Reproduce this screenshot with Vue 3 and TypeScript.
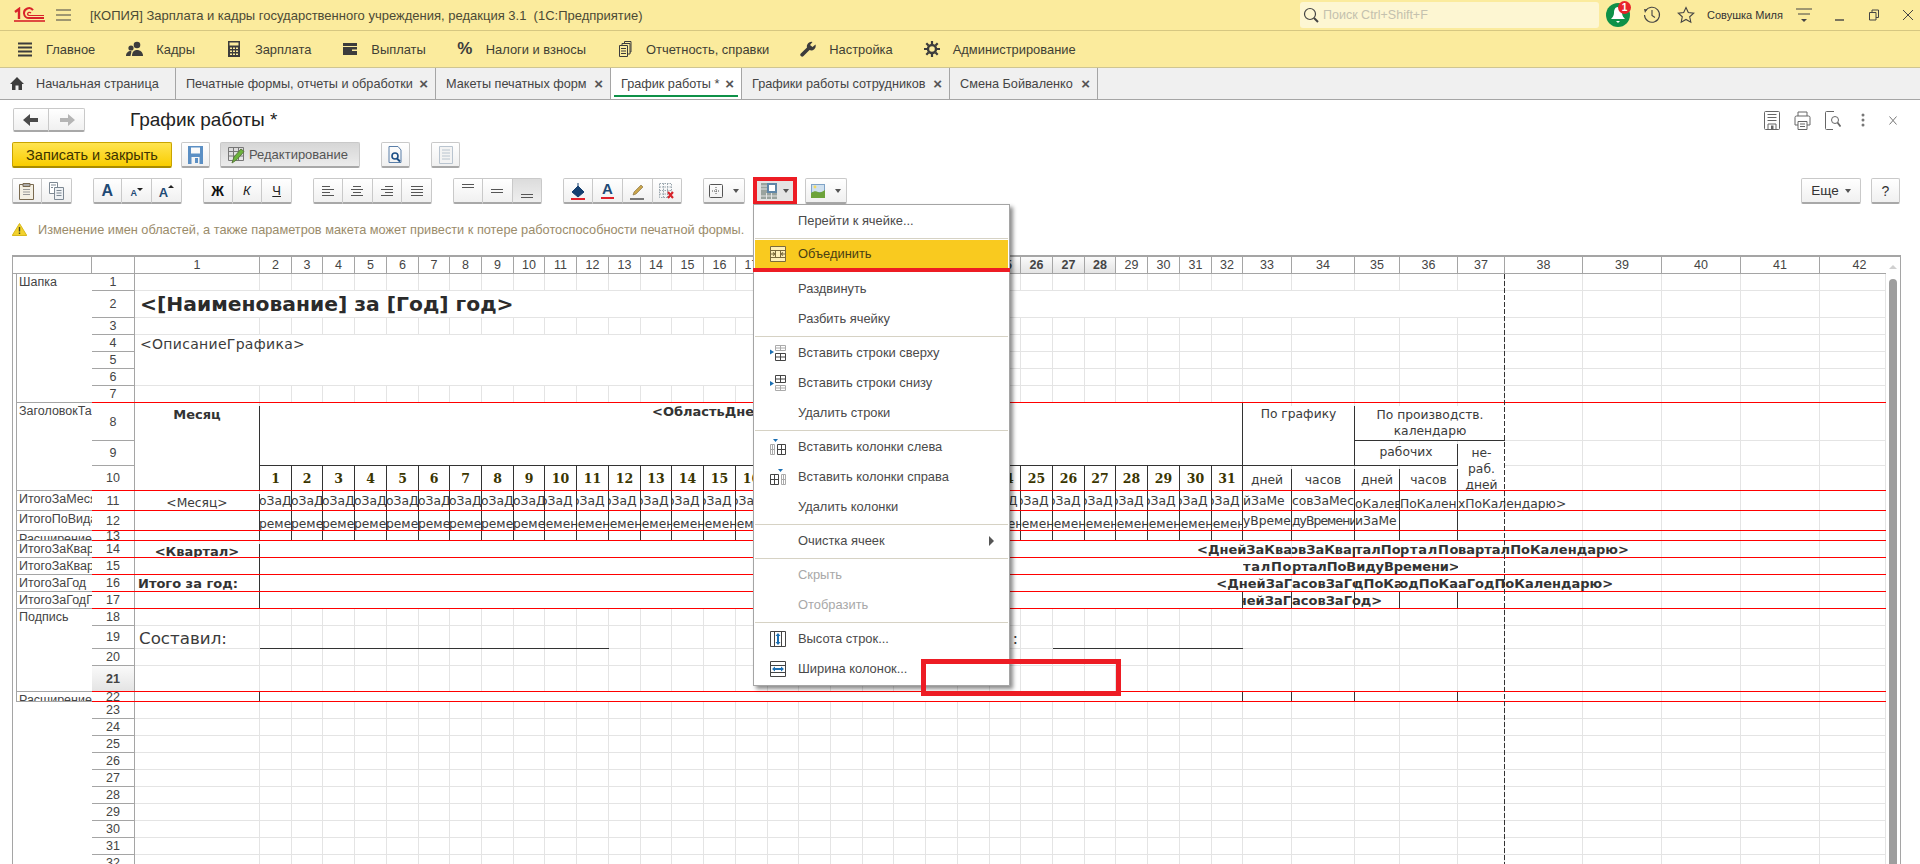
<template>
  <div class="app">
    <!-- title bar -->
    <div class="titlebar">
      <svg class="logo" width="31" height="16" viewBox="0 0 31 16" fill="none" stroke="#d8232a">
        <path d="M1 5 5 2v10" stroke-width="2.4" />
        <path d="M19 3.2A5 5 0 0 0 10 6.5 5 5 0 0 0 15 11h15" stroke-width="2" />
        <path d="M17 6a2 2 0 0 0-3.5 1 2 2 0 0 0 2 1.5H30" stroke-width="1.2" />
        <path d="M0 14h31" stroke-width="1.6" />
      </svg>
      <svg class="burger" width="15" height="12" viewBox="0 0 15 12" stroke="#444"><path d="M0 1h15M0 6h15M0 11h15" /></svg>
      <span class="app-title">[КОПИЯ] Зарплата и кадры государственного учреждения, редакция 3.1&nbsp; (1С:Предприятие)</span>
      <div class="search">
        <svg width="16" height="17" viewBox="0 0 16 17" fill="none" stroke="#444"><circle cx="7" cy="7" r="5.5" stroke-width="1.2" /><path d="m11 11 4 4" stroke-width="2" /></svg>
        <span>Поиск Ctrl+Shift+F</span>
      </div>
      <div class="bell">
        <svg width="26" height="26" viewBox="0 0 26 26"><circle cx="13" cy="13" r="12" fill="#0e9148" /><path d="M13 5c-3 0-4 3-4 6 0 3-2 5-3 6h14c-1-1-3-3-3-6 0-3-1-6-4-6zM11 19h4l-2 2z" fill="#fff" /></svg>
        <span class="badge">1</span>
      </div>
      <svg class="hist" width="18" height="18" viewBox="0 0 18 18" fill="none" stroke="#444" stroke-width="1.1"><path d="M2.5 5A7.5 7.5 0 1 1 1.5 9" /><path d="M1 3l3 .5L2 7z" fill="#444" stroke="none" /><path d="M9 4v5.5l3 2" /></svg>
      <svg class="star" width="18" height="18" viewBox="0 0 18 18" fill="none" stroke="#444" stroke-width="1.1"><path d="m9 1.5 2.3 5 5.4.6-4 3.7 1.1 5.4L9 13.4l-4.8 2.8 1.1-5.4-4-3.7 5.4-.6z" /></svg>
      <span class="user">Совушка Миля</span>
      <svg class="umenu" width="16" height="16" viewBox="0 0 16 16" stroke="#444"><path d="M0 2h16M2 7h12" /><path d="M5 12h6l-3 3z" fill="#444" stroke="none" /></svg>
      <svg class="win" width="12" height="12" viewBox="0 0 12 12" stroke="#444"><path d="M1 11h9" stroke-width="1.4" /></svg>
      <svg class="win" width="12" height="12" viewBox="0 0 12 12" fill="none" stroke="#444"><path d="M1.500 3.500h6.500v7.500H1.500zM4 3.500V1h6.500v7.500H8" /></svg>
      <svg class="win" width="12" height="12" viewBox="0 0 12 12" stroke="#444"><path d="m1 1 10 10M11 1 1 11" /></svg>
    </div>

    <!-- sections -->
    <nav class="menubar">
      <div class="mitem">
        <svg width="16" height="16" viewBox="0 0 16 16" stroke="#3c3c3c" stroke-width="2"><path d="M1 2.500h14M1 6.500h14M1 10.500h14M1 14.500h14" /></svg>
        <span>Главное</span>
      </div>
      <div class="mitem">
        <svg width="17" height="16" viewBox="0 0 17 16" fill="#3c3c3c"><circle cx="11" cy="4" r="3.300" /><path d="M6 15c0-4 2-6 5-6s6 2 6 6z" /><circle cx="5" cy="7" r="2.600" /><path d="M0 15c0-3 2-5 5-5 1 0 0 2-.5 5z" /></svg>
        <span>Кадры</span>
      </div>
      <div class="mitem">
        <svg width="16" height="16" viewBox="0 0 16 16" fill="#3c3c3c"><path fill-rule="evenodd" d="M2 0h12v16H2zM3.500 1.500v3h9v-3zM4 6.500V8h2V6.500zm3 0V8h2V6.500zm3 0V8h2V6.500zM4 9.500V11h2V9.500zm3 0V11h2V9.500zm3 0V11h2V9.500zM4 12.500V14h2v-1.500zm3 0V14h2v-1.500zm3 0V14h2v-1.500z" /></svg>
        <span>Зарплата</span>
      </div>
      <div class="mitem">
        <svg width="16" height="16" viewBox="0 0 16 16" fill="#3c3c3c"><path d="M1 2h14v3H1zM1 6h14v8H1z" /><path d="M10 8.500h5v1.500h-5z" fill="#fbeb9d" /></svg>
        <span>Выплаты</span>
      </div>
      <div class="mitem">
        <b class="pct">%</b>
        <span>Налоги и взносы</span>
      </div>
      <div class="mitem">
        <svg width="16" height="16" viewBox="0 0 16 16" fill="none" stroke="#3c3c3c"><path d="M2.500 4.500h8v11h-8zM5 4.500v-2h8v10.500h-2.500M7.500 2.500V.5h6.500v10.500H13" /><path d="M4 7.500h5M4 10h5M4 12.500h5" /></svg>
        <span>Отчетность, справки</span>
      </div>
      <div class="mitem">
        <svg width="16" height="16" viewBox="0 0 16 16" fill="#3c3c3c"><path d="M15.500 3.500 12.500 6 10 4 12.500 1A4.500 4.500 0 0 0 7 6.500L.8 12.500a1.800 1.800 0 0 0 2.700 2.500l6-6a4.500 4.500 0 0 0 6-5.500z" /></svg>
        <span>Настройка</span>
      </div>
      <div class="mitem">
        <svg width="16" height="16" viewBox="0 0 16 16" fill="none" stroke="#3c3c3c"><circle cx="8" cy="8" r="4" stroke-width="2.400" /><path d="M8 0v3M8 13v3M0 8h3M13 8h3M2.300 2.300l2.200 2.200M11.500 11.500l2.200 2.200M2.300 13.700l2.200-2.200M11.500 4.500l2.200-2.200" stroke-width="2.200" /></svg>
        <span>Администрирование</span>
      </div>
    </nav>

    <!-- open tabs -->
    <div class="tabs">
      <div class="tab first">
        <svg width="14" height="13" viewBox="0 0 14 13" fill="#3c3c3c"><path d="M7 0 0 7h2v6h3.500V8.500h3V13H12V7h2z" /></svg>
        <span>Начальная страница</span>
      </div>
      <div v-for="t in tabs" :key="t.name" class="tab" :class="{ active: t.active }" :style="{ width: t.w + 'px' }">
        <span>{{ t.name }}</span>
        <i class="x">×</i>
      </div>
    </div>

    <div class="form">
      <div class="form-head">
        <div class="grp nav">
          <button class="btn">
            <svg width="16" height="12" viewBox="0 0 16 12" fill="#4a4a4a"><path d="M0 6 7 0v4h8v4H7v4z" /></svg>
          </button>
          <button class="btn">
            <svg width="16" height="12" viewBox="0 0 16 12" fill="#b5b5b5"><path d="M16 6 9 0v4H1v4h8v4z" /></svg>
          </button>
        </div>
        <h1>График работы *</h1>
        <div class="head-icons">
          <svg width="16" height="19" viewBox="0 0 16 19" fill="none" stroke="#666"><path d="M.5 1.500a1 1 0 0 1 1-1h13a1 1 0 0 1 1 1v16a1 1 0 0 1-1 1h-13a1 1 0 0 1-1-1z" /><path d="M3.500 3.500h9M3.500 6.500h9M3.500 9.500h9" /><path d="M4 13h8v5.500H4z" /><path d="M7 14.500h2.500v4H7z" fill="#666" stroke="none" /></svg>
          <svg width="17" height="19" viewBox="0 0 17 19" fill="none" stroke="#666"><path d="M4 5V1h9v4M4 14H1V6.500A1.500 1.500 0 0 1 2.500 5h12A1.500 1.500 0 0 1 16 6.500V14h-3" /><path d="M4 10.500h9v8H4zM6 13h5M6 15.500h5" /></svg>
          <svg width="16" height="19" viewBox="0 0 16 19" fill="none" stroke="#666"><path d="M8 18.500H1.500a1 1 0 0 1-1-1v-16a1 1 0 0 1 1-1H9" /><circle cx="10" cy="9" r="3.500" /><path d="m12.500 11.500 3 4" stroke-width="1.800" /></svg>
          <svg width="16" height="14" viewBox="0 0 16 14" fill="#777"><circle cx="8" cy="2" r="1.500" /><circle cx="8" cy="7" r="1.500" /><circle cx="8" cy="12" r="1.500" /></svg>
          <svg width="16" height="9" viewBox="0 0 16 9" stroke="#777"><path d="m4.500.5 7 8M11.500.5l-7 8" /></svg>
        </div>
      </div>

      <div class="bar one">
        <button class="btn primary">Записать и закрыть</button>
        <button class="btn ic">
          <svg width="15" height="18" viewBox="0 0 15 18" fill="#5b8fc4"><path fill-rule="evenodd" d="M0 0h15v18H0zM3 1.500v6h9v-6zM3.500 11v7h8v-7z" /><path d="M7 12h3v5H7z" /></svg>
        </button>
        <button class="btn pressed">
          <svg width="18" height="18" viewBox="0 0 18 18" fill="none" stroke="#777"><path d="M.5 1.500h15v13H.5zM.5 5.500h15M.5 10h15M5.500 1.500v13M10.500 1.500v13" /><path d="M4 17 6 11l7-8 3 2.500-7 8z" fill="#6bb33c" stroke="#5a7a3c" /></svg>
          <span>Редактирование</span>
        </button>
        <button class="btn ic">
          <svg width="15" height="18" viewBox="0 0 15 18" fill="none" stroke="#5b7fa8"><path d="M10 .5H1v16h12V4z" /><circle cx="7" cy="10" r="3" stroke="#1d4f86" stroke-width="1.600" /><path d="m9 12.500 3 3" stroke="#1d4f86" stroke-width="2" /></svg>
        </button>
        <button class="btn ic">
          <svg width="14" height="18" viewBox="0 0 14 18" fill="#f3f3f3" stroke="#b9c4cf"><path d="M.5.5h13v17H.5z" /><path d="M3 4h8M3 7h8M3 10h8M3 13h8" /></svg>
        </button>
      </div>

      <div class="bar two">
        <div class="grp">
          <button class="btn">
            <svg width="15" height="18" viewBox="0 0 15 18" fill="#f4f0e4" stroke="#7a6a50"><path d="M.5 2.500h14v15H.5z" /><path d="M4 1.500h7v3H4z" fill="#aaa" /><path d="M4 7.500h7M4 10h7M4 12.500h7" stroke="#999" /></svg>
          </button>
          <button class="btn">
            <svg width="15" height="18" viewBox="0 0 15 18" fill="#fff" stroke="#7d8893"><path d="M.5.5h8v11h-8z" /><path d="M5.500 5.500h9v12h-9z" fill="#eef1f4" /><path d="M2 3h5M2 5.500h2M7.500 8.500h5M7.500 11h5M7.500 13.500h5" /></svg>
          </button>
        </div>
        <div class="grp">
          <button class="btn"><b class="big">A</b></button>
          <button class="btn"><b class="small">A</b><i class="tri dn" /></button>
          <button class="btn"><b class="mid">A</b><i class="tri up" /></button>
        </div>
        <div class="grp fmt">
          <button class="btn"><b>Ж</b></button>
          <button class="btn"><em>К</em></button>
          <button class="btn"><u>Ч</u></button>
        </div>
        <div class="grp">
          <button v-for="p in alignPaths" :key="p" class="btn">
            <svg width="14" height="12" viewBox="0 0 14 12" stroke="#555"><path :d="p" /></svg>
          </button>
        </div>
        <div class="grp">
          <button class="btn"><svg width="14" height="18" viewBox="0 0 14 18" stroke="#555"><path d="M1 2.500h12M1 5.500h12" /></svg></button>
          <button class="btn"><svg width="14" height="18" viewBox="0 0 14 18" stroke="#555"><path d="M1 7.500h12M1 10.500h12" /></svg></button>
          <button class="btn on"><svg width="14" height="18" viewBox="0 0 14 18" stroke="#555"><path d="M1 12.500h12M1 15.500h12" /></svg></button>
        </div>
        <div class="grp">
          <button class="btn">
            <svg width="14" height="18" viewBox="0 0 14 18"><path d="M7 1v4M7 4l6 6-6 5-6-5z" fill="#143f70" stroke="#143f70" /><path d="M0 16h14v2H0z" fill="#e0202a" /></svg>
          </button>
          <button class="btn col"><b>A</b><i /></button>
          <button class="btn">
            <svg width="14" height="18" viewBox="0 0 14 18"><path d="m3 13 1-3 7-7 2 2-7 7z" fill="#c9a44a" stroke="#7d6a3c" stroke-width=".6" /><path d="M0 16h14v2H0z" fill="#777" /></svg>
          </button>
          <button class="btn">
            <svg width="16" height="18" viewBox="0 0 16 18" fill="none" stroke="#9aa6ae"><path d="M.5 1.500h12v14H.5zM.5 5h12M.5 8.500h12M.5 12h12M4.500 1.500v14M8.500 1.500v14" stroke-dasharray="1.500 1" /><path d="m9 10 5 6M14 10l-5 6" stroke="#d8232a" stroke-width="2" /></svg>
          </button>
        </div>
        <button class="btn drop">
          <svg width="14" height="14" viewBox="0 0 14 14" fill="none" stroke="#555"><rect x=".5" y=".5" width="13" height="13" rx="1" /><path d="M7 3v8M3 7h8" stroke-dasharray="1 1" /></svg>
          <i class="caret" />
        </button>
        <button class="btn drop merge">
          <svg width="16" height="16" viewBox="0 0 16 16"><path d="M0 0h6v16H0zM0 10h16v6H0z" fill="#9aa39e" /><path d="M6 0h10v10H6z" fill="#5f86a8" /><path d="M8 2h6v6H8z" fill="#fff" /><path d="M0 3h6M0 6h6M0 13h16M5.500 10v6M10.500 10v6" stroke="#e3e3e3" /></svg>
          <i class="caret" />
        </button>
        <button class="btn drop">
          <svg width="14" height="14" viewBox="0 0 14 14"><path d="M0 0h14v14H0z" fill="#7fa3c7" /><path d="M1 1h12v7H1z" fill="#cfe0ee" /><path d="M0 9c3-2 5-2 7-1s4 0 7-2v8H0z" fill="#6da33a" /><circle cx="4" cy="3" r="1.400" fill="#f3d95c" /></svg>
          <i class="caret" />
        </button>
        <button class="btn more">Еще<i class="caret" /></button>
        <button class="btn help">?</button>
      </div>

      <div class="warn">
        <svg width="15" height="13" viewBox="0 0 15 13"><path d="M7.500.5 14.800 12.500H.2z" fill="#f2d22e" stroke="#d8b81c" /><path d="M6.800 4h1.400v4.500H6.800zM6.800 9.500h1.400V11H6.800z" fill="#4a4a20" /></svg>
        <span>Изменение имен областей, а также параметров макета может привести к потере работоспособности печатной формы.</span>
      </div>

      <!-- spreadsheet template -->
      <div class="sheet" :style="sheetGrid">
        <i v-for="n in 42" :key="'cl' + n" class="vline" :style="{ gridColumn: n + 3 }" />
        <i v-for="r in 32" :key="'rl' + r" class="hline" :style="{ gridRow: r + 1 }" />

        <div class="corner" />
        <div class="corner second" />
        <div v-for="n in 42" :key="'h' + n" class="hcell" :class="{ sel: n >= 18 && n <= 28, cut: n === 42 }" :style="{ gridColumn: n + 3 }">{{ n }}</div>
        <div v-for="r in 32" :key="'rh' + r" class="rowhead" :class="{ sel: r === 21 }" :style="{ gridRow: r + 1 }">{{ r }}</div>

        <div
          v-for="a in areas"
          :key="a.t + a.r"
          class="area"
          :style="{ gridRow: a.r + 1 + ' / ' + (a.r2 + 2) }"
        >{{ a.t }}</div>

        <div
          v-for="(c, i) in cells"
          :key="i"
          class="cell"
          :class="c.k"
          :style="{ gridColumn: c.c + 3 + ' / ' + (c.c2 + 4), gridRow: c.r + 1 + ' / ' + (c.r2 + 2) }"
        ><span>{{ c.t }}</span></div>

        <i v-for="r in redRows" :key="'red' + r" class="red" :style="{ gridRow: r + 1 }" />
        <i class="dash" />
        <div class="scroll"><i class="arrow" /><i class="thumb" /></div>
      </div>
    </div>

    <!-- open popup -->
    <div class="popup">
      <template v-for="(m, i) in menu" :key="i">
        <div v-if="m.sep" class="sep" />
        <template v-else-if="m.hl">
          <div class="pitem hl">
            <span class="pic">
              <svg width="16" height="16" viewBox="0 0 16 16" fill="#fff0b8" stroke="#7a6a3c"><path d="M.5.5h15v15H.5zM.5 4.500h15M.5 11.500h15M5.500 4.500v7M10.500 4.500v7" /><path d="M.5 8h5M10.500 8h5" /><path d="M3 6.500 5 8 3 9.500M13 6.500 11 8l2 1.500" fill="none" stroke-width="1.200" /></svg>
            </span>
            <span>{{ m.t }}</span>
          </div>
          <div class="redbar" />
        </template>
        <div v-else class="pitem" :class="{ off: m.off }">
          <span class="pic">
            <svg v-if="m.ic === 'rowTop'" width="16" height="16" viewBox="0 0 16 16" fill="none"><path d="M0 4.500 4 7 0 9.500z" fill="#1b6fb3" /><path d="M5.500.5h10v5h-10zM5.500 3h10M10.500.5v5" stroke="#aaa" /><path d="M5.500 8.500h10v7h-10zM5.500 12h10M10.500 8.500v7" stroke="#444" /></svg>
            <svg v-else-if="m.ic === 'rowBot'" width="16" height="16" viewBox="0 0 16 16" fill="none"><path d="M0 6 4 8.500 0 11z" fill="#1b6fb3" /><path d="M5.500.5h10v7h-10zM5.500 4h10M10.500.5v7" stroke="#444" /><path d="M5.500 10.500h10v5h-10zM5.500 13h10M10.500 10.500v5" stroke="#aaa" /></svg>
            <svg v-else-if="m.ic === 'colL'" width="16" height="16" viewBox="0 0 16 16" fill="none"><path d="M3 0h5L5.500 3z" fill="#1b6fb3" /><path d="M.5 5.500h4v10h-4zM.5 10.500h4M2.500 5.500v10" stroke="#aaa" /><path d="M7.500 5.500h8v10h-8zM7.500 10.500h8M11.500 5.500v10" stroke="#444" /></svg>
            <svg v-else-if="m.ic === 'colR'" width="16" height="16" viewBox="0 0 16 16" fill="none"><path d="M8 0h5l-2.500 3z" fill="#1b6fb3" /><path d="M.5 5.500h8v10h-8zM.5 10.500h8M4.500 5.500v10" stroke="#444" /><path d="M11.500 5.500h4v10h-4zM11.500 10.500h4M13.500 5.500v10" stroke="#aaa" /></svg>
            <svg v-else-if="m.ic === 'hgt'" width="16" height="16" viewBox="0 0 16 16" fill="none"><path d="M.5.5h15v15H.5zM4.500.5v15M11.500.5v15" stroke="#444" /><path d="M8 2 10.500 5h-5zM8 14 10.500 11h-5z" fill="#1b6fb3" /><path d="M7 4h2v8H7z" fill="#1b6fb3" /></svg>
            <svg v-else-if="m.ic === 'wdt'" width="16" height="16" viewBox="0 0 16 16" fill="none"><path d="M.5.5h15v15H.5zM.5 4.500h15M.5 11.500h15" stroke="#444" /><path d="M2 8 5 5.500v5zM14 8l-3-2.500v5z" fill="#1b6fb3" /><path d="M4 7h8v2H4z" fill="#1b6fb3" /></svg>
          </span>
          <span>{{ m.t }}</span>
          <i v-if="m.sub" class="subarrow" />
        </div>
      </template>
    </div>
    <div class="callout" />
  </div>
</template>

<script setup lang="ts">
import { computed } from 'vue'

interface Cell {
  c: number
  c2: number
  r: number
  r2: number
  t: string
  k: string
}

interface MenuRow {
  t?: string
  sep?: boolean
  hl?: boolean
  off?: boolean
  sub?: boolean
  ic?: string
}

const tabs = [
  { name: 'Печатные формы, отчеты и обработки', w: 260, active: false },
  { name: 'Макеты печатных форм', w: 175, active: false },
  { name: 'График работы *', w: 131, active: true },
  { name: 'Графики работы сотрудников', w: 208, active: false },
  { name: 'Смена Бойваленко', w: 148, active: false }
]

const alignPaths = [
  'M1 1.500h8M1 4.500h12M1 7.500h8M1 10.500h12',
  'M3 1.500h8M1 4.500h12M3 7.500h8M1 10.500h12',
  'M5 1.500h8M1 4.500h12M5 7.500h8M1 10.500h12',
  'M1 1.500h12M1 4.500h12M1 7.500h12M1 10.500h12'
]

// column edges of the sheet, in page pixels
const edges: number[] = [13, 16, 92, 135, 260]
for (let n = 2; n <= 32; n++) edges.push(Math.round(260 + (n - 1) * 31.72))
edges.push(1292, 1355, 1400, 1458, 1505, 1583, 1662, 1741, 1820, 1886, 1900)

const rowSizes = [17, 17, 27, 17, 17, 17, 17, 17, 38, 25, 25, 20, 20, 10, 17, 17, 17, 17, 17, 23, 17, 26, 10]
for (let r = 23; r <= 32; r++) rowSizes.push(17)

const sheetGrid = computed(() => ({
  gridTemplateColumns: edges.slice(1).map((e, i) => e - edges[i] + 'px').join(' '),
  gridTemplateRows: rowSizes.map((h) => h + 'px').join(' ')
}))

const areas = [
  { t: 'Шапка', r: 1, r2: 7 },
  { t: 'ЗаголовокТаблицы', r: 8, r2: 10 },
  { t: 'ИтогоЗаМесяц', r: 11, r2: 11 },
  { t: 'ИтогоПоВидамВремени', r: 12, r2: 12 },
  { t: 'Расширение', r: 13, r2: 13 },
  { t: 'ИтогоЗаКвартал', r: 14, r2: 14 },
  { t: 'ИтогоЗаКвартал', r: 15, r2: 15 },
  { t: 'ИтогоЗаГод', r: 16, r2: 16 },
  { t: 'ИтогоЗаГодПоВидам', r: 17, r2: 17 },
  { t: 'Подпись', r: 18, r2: 21 },
  { t: 'Расширение', r: 22, r2: 22 }
]

const redRows = [7, 10, 11, 12, 13, 14, 15, 16, 17, 21, 22]

function cell(c: number, c2: number, r: number, r2: number, t = '', k = ''): Cell {
  return { c, c2, r, r2, t, k }
}

const cells: Cell[] = [
  cell(1, 37, 2, 2, '<[Наименование] за [Год] год>', 'm title'),
  cell(1, 24, 4, 6, '<ОписаниеГрафика>', 'm desc'),
  cell(1, 1, 8, 10, 'Месяц', 'bold top mid br'),
  cell(2, 32, 8, 9, '<ОбластьДней>', 'bold top br bb region'),
  cell(33, 34, 8, 9, 'По графику', 'top mid br bb'),
  cell(35, 37, 8, 8, 'По производств.\nкалендарю', 'top mid wrap bb'),
  cell(35, 36, 9, 9, 'рабочих', 'top mid br bb'),
  cell(37, 37, 9, 10, 'не-\nраб.\nдней', 'top mid wrap'),
  cell(33, 33, 10, 10, 'дней', 'mid br'),
  cell(34, 34, 10, 10, 'часов', 'mid br'),
  cell(35, 35, 10, 10, 'дней', 'mid br'),
  cell(36, 36, 10, 10, 'часов', 'mid br'),
  cell(1, 1, 11, 11, '<Месяц>', 'mid br'),
  cell(1, 1, 12, 12, '', 'br'),
  cell(1, 1, 13, 13, '', 'br'),
  cell(1, 1, 14, 14, '<Квартал>', 'bold mid br'),
  cell(1, 1, 15, 15, '', 'br'),
  cell(1, 1, 16, 16, 'Итого за год:', 'bold br pad'),
  cell(1, 1, 17, 17, '', 'br'),
  cell(2, 32, 14, 14),
  cell(2, 32, 15, 15),
  cell(2, 32, 16, 16),
  cell(2, 32, 17, 17, '', 'br'),
  cell(33, 33, 11, 11, 'йЗаМе', 'br'),
  cell(34, 34, 11, 11, 'совЗаМес', 'br'),
  cell(35, 35, 11, 11, 'оКалев', 'br low'),
  cell(36, 36, 11, 11, 'ПоКален', 'br low'),
  cell(37, 37, 11, 11, 'хПоКалендарю>', 'ov low'),
  cell(33, 33, 12, 12, 'уВреме', 'br'),
  cell(34, 34, 12, 12, 'дуВремени', 'br tight'),
  cell(35, 35, 12, 12, 'иЗаМе', 'br'),
  cell(36, 36, 12, 12, '', 'br'),
  cell(37, 37, 12, 12),
  cell(33, 33, 13, 13, '', 'br'),
  cell(34, 34, 13, 13, '', 'br'),
  cell(35, 35, 13, 13, '', 'br'),
  cell(36, 36, 13, 13, '', 'br'),
  cell(37, 37, 13, 13),
  cell(33, 33, 14, 14, '<ДнейЗаКва', 'bold ov end'),
  cell(34, 34, 14, 14, 'овЗаКвар', 'bold shift'),
  cell(35, 35, 14, 14, 'талПо', 'bold'),
  cell(36, 36, 14, 14, 'рталПо', 'bold wide'),
  cell(37, 37, 14, 14, 'варталПоКалендарю>', 'bold ov'),
  cell(33, 33, 15, 15, 'талПо', 'bold wide'),
  cell(34, 36, 15, 15, 'рталПоВидуВремени>', 'bold snug'),
  cell(37, 37, 15, 15),
  cell(33, 33, 16, 16, '<ДнейЗаГ', 'bold ov end'),
  cell(34, 34, 16, 16, 'асовЗаГо', 'bold'),
  cell(35, 35, 16, 16, 'дПоКа', 'bold nudge'),
  cell(36, 36, 16, 16, 'одПоКа', 'bold end'),
  cell(37, 37, 16, 16, 'аГодПоКалендарю>', 'bold ov'),
  cell(33, 33, 17, 17, 'нейЗаГ', 'bold br end'),
  cell(35, 35, 17, 17, '', 'br'),
  cell(36, 36, 17, 17, '', 'br'),
  cell(37, 37, 17, 17),
  cell(34, 34, 17, 17, 'асовЗаГод>', 'bold ov br'),
  cell(1, 1, 19, 19, 'Составил:', 'clear sign'),
  cell(2, 12, 19, 19, '', 'clear bb'),
  cell(25, 25, 19, 19, ':', 'clear sign end'),
  cell(27, 32, 19, 19, '', 'clear bb'),
  cell(1, 1, 22, 22, '', 'br'),
  cell(2, 32, 22, 22, '', 'br'),
  cell(33, 33, 22, 22, '', 'br'),
  cell(34, 34, 22, 22, '', 'br'),
  cell(35, 36, 22, 22, '', 'br'),
  cell(37, 37, 22, 22)
]

// day columns 1..31 of rows 10-13
for (let n = 2; n <= 32; n++) {
  cells.push(cell(n, n, 10, 10, String(n - 1), 'num br'))
  cells.push(cell(n, n, 11, 11, 'оЗаД', n < 11 ? 'br frag' : 'br frag2'))
  cells.push(cell(n, n, 12, 12, 'ремени', n < 11 ? 'br frag low' : 'br frag3 low'))
  cells.push(cell(n, n, 13, 13, '', 'br'))
}

const menu: MenuRow[] = [
  { t: 'Перейти к ячейке...' },
  { sep: true },
  { t: 'Объединить', hl: true },
  { t: 'Раздвинуть' },
  { t: 'Разбить ячейку' },
  { sep: true },
  { t: 'Вставить строки сверху', ic: 'rowTop' },
  { t: 'Вставить строки снизу', ic: 'rowBot' },
  { t: 'Удалить строки' },
  { sep: true },
  { t: 'Вставить колонки слева', ic: 'colL' },
  { t: 'Вставить колонки справа', ic: 'colR' },
  { t: 'Удалить колонки' },
  { sep: true },
  { t: 'Очистка ячеек', sub: true },
  { sep: true },
  { t: 'Скрыть', off: true },
  { t: 'Отобразить', off: true },
  { sep: true },
  { t: 'Высота строк...', ic: 'hgt' },
  { t: 'Ширина колонок...', ic: 'wdt' }
]
</script>

<style>
html,
body {
  margin: 0;
  height: 864px;
  overflow: hidden;
  background: #fff;
}
</style>

<style scoped>
.app {
  position: relative;
  width: 1920px;
  height: 864px;
  display: flex;
  flex-direction: column;
  overflow: hidden;
  font: 12px "Liberation Sans", Arial, sans-serif;
  color: #333;
}

.titlebar {
  height: 30px;
  flex: none;
  display: flex;
  align-items: center;
  background: #fbeb9d;
  border-bottom: 1px solid #d6c781;
}
.logo { margin-left: 14px; }
.burger { margin-left: 11px; }
.app-title {
  margin-left: 19px;
  width: 1210px;
  white-space: nowrap;
  font-size: 13px;
  color: #4b4a35;
}
.search {
  width: 299px;
  height: 26px;
  box-sizing: border-box;
  display: flex;
  align-items: center;
  gap: 4px;
  padding-left: 3px;
  border-radius: 3px;
  background: #fdf6d2;
  color: #c4c1ae;
  font-size: 12.5px;
}
.bell {
  position: relative;
  margin-left: 6px;
  height: 26px;
}
.badge {
  position: absolute;
  top: -1px;
  left: 13px;
  width: 13px;
  height: 13px;
  border-radius: 50%;
  background: #e8232a;
  color: #fff;
  font: bold 10px/13px "Liberation Sans", sans-serif;
  text-align: center;
}
.hist { margin-left: 12px; }
.star { margin-left: 16px; }
.user {
  margin-left: 12px;
  width: 76px;
  white-space: nowrap;
  font-size: 11px;
}
.umenu { margin-left: 13px; }
.win { margin-left: 22px; }

.menubar {
  height: 36px;
  flex: none;
  display: flex;
  align-items: center;
  gap: 31px;
  padding-left: 17px;
  background: #fbeb9d;
  border-bottom: 1px solid #cfc591;
  font-size: 12.9px;
  color: #3f3f34;
}
.mitem {
  display: flex;
  align-items: center;
  gap: 13px;
  white-space: nowrap;
}
.pct {
  width: 16px;
  font-size: 17px;
  text-align: center;
  color: #3c3c3c;
}

.tabs {
  height: 31px;
  flex: none;
  display: flex;
  background: #f0f0f0;
  border-bottom: 1px solid #a5a5a5;
  font-size: 12.7px;
  color: #444;
}
.tab {
  position: relative;
  box-sizing: border-box;
  display: flex;
  align-items: center;
  justify-content: space-between;
  padding: 0 7px 0 10px;
  border-right: 1px solid #a5a5a5;
  white-space: nowrap;
}
.tab.first {
  width: 176px;
  justify-content: flex-start;
  gap: 12px;
}
.tab.active { background: #fff; }
.tab.active::after {
  content: "";
  position: absolute;
  left: 3px;
  right: 3px;
  bottom: 2px;
  height: 2px;
  background: #0e9148;
}
.x {
  font: bold 15px/1 "Liberation Sans", sans-serif;
  color: #555;
}

.form {
  flex: 1;
  min-height: 0;
  display: flex;
  flex-direction: column;
  padding: 8px 19px 0 12px;
}
.form-head {
  height: 24px;
  flex: none;
  display: flex;
  align-items: center;
}
.form-head h1 {
  margin: 0 0 0 45px;
  font-size: 19px;
  font-weight: 400;
  color: #222;
}
.head-icons {
  margin-left: auto;
  display: flex;
  align-items: center;
  gap: 14px;
}

.bar {
  display: flex;
  flex: none;
  height: 26px;
  margin-top: 10px;
}
.bar.one { gap: 21px; }
.bar.two { gap: 21px; margin-right: 1px; }

.btn {
  box-sizing: border-box;
  height: 26px;
  padding: 0;
  display: inline-flex;
  align-items: center;
  justify-content: center;
  border: 1px solid #c9c9c9;
  border-bottom: 2px solid #a8a8a8;
  border-radius: 2px;
  background: linear-gradient(#fff, #f0f0f0);
  font: 12.5px "Liberation Sans", sans-serif;
  color: #333;
}
.grp { display: flex; }
.grp .btn {
  width: 29.750px;
  border-radius: 0;
  border-left-width: 0;
}
.grp .btn:first-child {
  border-left-width: 1px;
  border-radius: 2px 0 0 2px;
}
.grp .btn:last-child { border-radius: 0 2px 2px 0; }
.grp.nav .btn { width: 36px; height: 24px; }
.grp.nav { margin-left: 1px; }
.btn.on { background: linear-gradient(#dcdcdc, #efefef); }
.primary {
  width: 160px;
  margin-right: -12px;
  border-color: #c9a400;
  border-bottom-color: #a98c00;
  background: linear-gradient(#ffe451, #f9cd00);
  font-size: 14.5px;
  color: #3c3300;
}
.ic { width: 29px; }
.one .ic:nth-child(2) { margin-right: -11px; }
.pressed {
  width: 140px;
  gap: 3px;
  padding-right: 4px;
  background: linear-gradient(#d6d6d6, #ececec);
  color: #555;
  font-size: 13px;
}
.big { font-size: 16px; color: #1f4a75; }
.small { font-size: 9px; margin-top: 5px; color: #1f4a75; }
.mid { font-size: 13px; margin-top: 3px; color: #1f4a75; }
.tri {
  width: 0;
  height: 0;
  margin: -9px 0 0 0;
  border: 3px solid transparent;
}
.tri.dn { border-top-color: #222; margin-top: -3px; border-bottom-width: 0; }
.tri.up { border-bottom-color: #222; border-top-width: 0; }
.fmt .btn { font-size: 14px; }
.fmt b { color: #111; }
.fmt em, .fmt u { font-size: 13px; color: #222; }
.col {
  position: relative;
}
.col b {
  margin-top: -4px;
  font-size: 15px;
  color: #1f4a75;
}
.col i {
  position: absolute;
  left: 8px;
  right: 8px;
  bottom: 3px;
  height: 2px;
  background: #e0202a;
}
.drop {
  width: 42px;
  gap: 10px;
  margin-left: -13px;
}
.grp + .drop { margin-left: 0; }
.merge {
  width: 44px;
  height: 28px;
  margin-top: -1px;
  border: 4px solid #ed1c24;
  border-radius: 0;
  background: #e4e4e4;
  gap: 6px;
}
.caret {
  width: 0;
  height: 0;
  border: 3px solid transparent;
  border-top: 4px solid #555;
  border-bottom: 0;
}
.more {
  width: 60px;
  margin-left: auto;
  gap: 6px;
  font-size: 13.5px;
}
.help {
  width: 29px;
  margin-left: -11px;
  font-size: 14px;
}

.warn {
  flex: none;
  height: 51px;
  display: flex;
  align-items: center;
  gap: 11px;
  font-size: 12.75px;
  color: #9a8b6a;
}

.sheet {
  flex: 1;
  min-height: 0;
  display: grid;
  align-content: start;
  box-sizing: border-box;
  overflow: hidden;
  border: 1px solid #a5a5a5;
  border-top-width: 2px;
  border-bottom: 0;
  font: 12px "DejaVu Sans", sans-serif;
}
.vline {
  grid-row: 2 / -1;
  z-index: 0;
  border-right: 1px solid #e4e4e4;
}
.hline {
  grid-column: 4 / 46;
  z-index: 0;
  border-bottom: 1px solid #e4e4e4;
}
.corner {
  grid-column: 1 / 3;
  grid-row: 1;
  border-bottom: 1px solid #a5a5a5;
  border-right: 1px solid #a5a5a5;
}
.corner.second {
  grid-column: 3;
}
.hcell,
.rowhead {
  position: relative;
  z-index: 2;
  display: flex;
  align-items: center;
  justify-content: center;
  overflow: hidden;
  background: #fff;
  border-right: 1px solid #a5a5a5;
  border-bottom: 1px solid #a5a5a5;
  font: 12.5px "Liberation Sans", sans-serif;
  color: #444;
}
.hcell { grid-row: 1; }
.hcell.cut { padding-left: 13px; border-right: 0; }
.rowhead { grid-column: 3; }
.hcell.sel,
.rowhead.sel {
  font-weight: 700;
  background: linear-gradient(#fafafa, #e4e4e4);
}
.area {
  grid-column: 2;
  z-index: 1;
  overflow: hidden;
  white-space: nowrap;
  box-sizing: border-box;
  padding: 1px 0 0 2px;
  background: #fff;
  border-left: 1px solid #a5a5a5;
  border-bottom: 1px solid #a5a5a5;
  font: 12.5px/15px "Liberation Sans", sans-serif;
  color: #444;
}

.cell {
  position: relative;
  z-index: 1;
  display: flex;
  align-items: center;
  overflow: hidden;
  white-space: nowrap;
  background: #fff;
  color: #3b3b3b;
  box-sizing: border-box;
  font-size: 12.3px;
}
.cell.m { border-bottom: 1px solid #e4e4e4; padding-left: 5px; }
.cell.title { font-size: 20.3px; font-weight: 700; color: #2b2b2b; }
.cell.desc { align-items: flex-start; padding-top: 1px; font-size: 14px; letter-spacing: .3px; }
.cell.bold { font-size: 13px; font-weight: 700; color: #333; }
.cell.top { align-items: flex-start; padding-top: 1px; }
.cell.mid { justify-content: center; }
.cell.br { border-right: 1px solid #333; }
.cell.bb { border-bottom: 1px solid #333; }
.cell.wrap { white-space: pre-line; text-align: center; line-height: 16px; }
.cell.region { padding-left: 392px; }
.cell.num {
  justify-content: center;
  font: 700 12.5px "DejaVu Serif", serif;
  color: #3a3500;
}
.cell.ov { overflow: visible; z-index: 2; background: transparent; }
.cell.end { justify-content: flex-end; }
.cell.low { align-items: flex-end; }
.cell.pad { padding-left: 3px; }
.cell.tight { letter-spacing: -.9px; }
.cell.wide { letter-spacing: .7px; }
.cell.snug { letter-spacing: -.1px; }
.cell.shift span { margin-left: -3px; }
.cell.nudge span { margin-left: -2px; }
.cell.frag span { margin-left: -1px; }
.cell.frag2 span { margin-left: -5px; }
.cell.frag3 span { margin-left: -7px; }
.cell.clear { background: transparent; }
.cell.sign { font-size: 16.7px; padding: 0 3px 0 4px; }
.red {
  grid-column: 3 / 46;
  align-self: end;
  height: 1px;
  z-index: 3;
  background: #f00;
}
.dash {
  grid-column: 40;
  grid-row: 2 / -1;
  justify-self: end;
  width: 1px;
  z-index: 4;
  background: repeating-linear-gradient(#333 0 5px, transparent 5px 7px);
}
.scroll {
  grid-column: 46;
  grid-row: 1 / -1;
  position: relative;
  z-index: 4;
  display: flex;
  flex-direction: column;
  align-items: center;
  background: #fff;
}
.arrow {
  width: 0;
  height: 0;
  margin-top: 8px;
  border: 4px solid transparent;
  border-top: 0;
  border-bottom: 4px solid #d0d0d0;
}
.thumb {
  width: 8px;
  height: 700px;
  margin-top: 10px;
  border-radius: 4px 4px 0 0;
  background: #9e9e9e;
}

.popup {
  position: absolute;
  left: 753px;
  top: 204px;
  width: 257px;
  box-sizing: border-box;
  padding: 1px;
  z-index: 10;
  background: #fff;
  border: 1px solid #a5a5a5;
  box-shadow: 3px 3px 4px rgba(0, 0, 0, .45);
  font-size: 12.9px;
  color: #4a4a4a;
}
.pitem {
  position: relative;
  box-sizing: border-box;
  height: 30px;
  padding-bottom: 1px;
  display: flex;
  align-items: center;
  white-space: nowrap;
}
.pic {
  width: 16px;
  height: 16px;
  margin: 0 12px 0 15px;
}
.pitem.hl {
  height: 28px;
  background: #f9ca1f;
  color: #4a4013;
}
.pitem.off { color: #a8a8a8; }
.sep {
  height: 4px;
  display: flex;
  align-items: center;
}
.sep::before {
  content: "";
  flex: 1;
  height: 1px;
  background: #d6d2c4;
}
.redbar {
  height: 4px;
  margin: 0 -2px 2px;
  background: #ed1c24;
}
.subarrow {
  position: absolute;
  right: 14px;
  width: 0;
  height: 0;
  border: 5px solid transparent;
  border-left: 5px solid #555;
  border-right: 0;
}
.callout {
  position: absolute;
  left: 921px;
  top: 659px;
  width: 200px;
  height: 37px;
  box-sizing: border-box;
  z-index: 11;
  border: 5px solid #ed1c24;
}
</style>
